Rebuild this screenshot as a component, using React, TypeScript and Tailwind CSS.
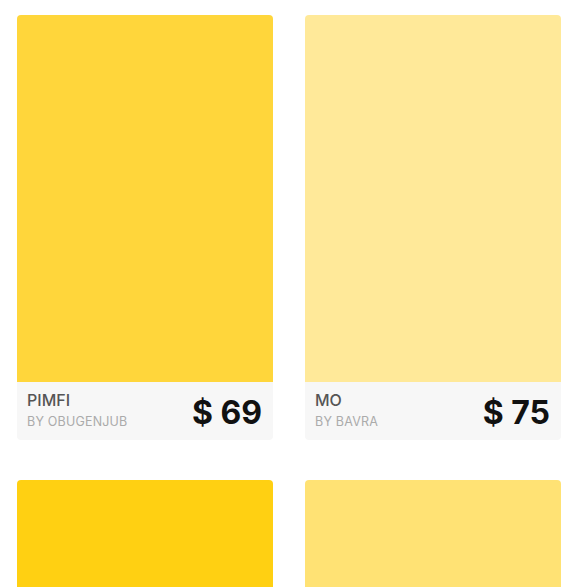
import React from "react";

type Item = { name?: string; by?: string; price?: number; color: string };

const items: Item[] = [
  { name: "PIMFI", by: "BY OBUGENJUB", price: 69, color: "bg-[#FFD63B]" },
  { name: "MO", by: "BY BAVRA", price: 75, color: "bg-[#FFE999]" },
  { color: "bg-[#FFD012]" },
  { color: "bg-[#FFE274]" },
];

function Card({ item }: { item: Item }) {
  return (
    <div className="flex flex-col overflow-hidden rounded-[4px]">
      <div className={`h-[367px] ${item.color}`} />
      {item.name && (
        <div className="flex h-[58px] items-center justify-between bg-[#F7F7F7] pl-[10px] pr-[11px]">
          <div className="flex flex-col">
            <span className="-mt-[2px] text-[16px] font-medium leading-[20px] text-[#555555]">{item.name}</span>
            <span className="mt-[4px] text-[12.5px] leading-[16px] tracking-[0.2px] text-[#ABABAB]">{item.by}</span>
          </div>
          <span className="pt-[3px] text-[32px] font-bold leading-none text-[#111111]">$ {item.price}</span>
        </div>
      )}
    </div>
  );
}

export default function App() {
  return (
    <div className="h-[587px] w-[576px] overflow-hidden bg-white pl-[17px] pt-[15px]" style={{ fontFamily: "Inter, 'Noto Sans', sans-serif" }}>
      <div className="grid grid-cols-[256px_256px] gap-x-[32px] gap-y-[40px]">
        {items.map((it, i) => (
          <Card key={i} item={it} />
        ))}
      </div>
    </div>
  );
}
